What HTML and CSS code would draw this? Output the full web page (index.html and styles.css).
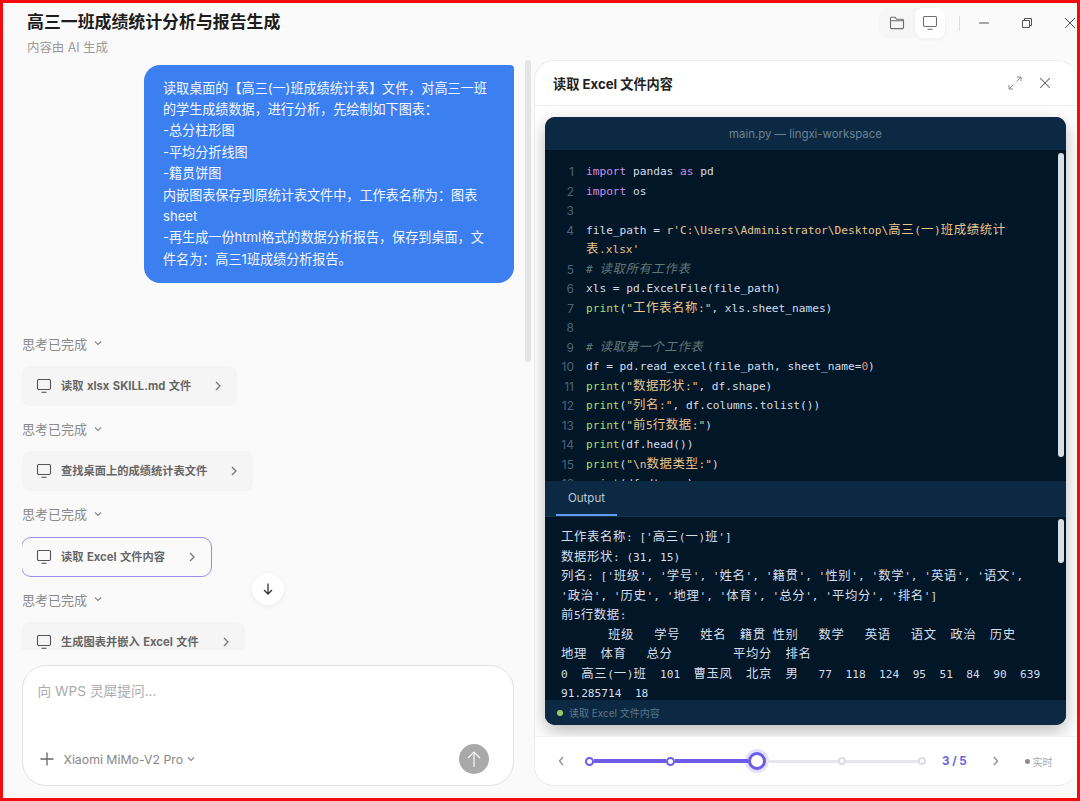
FILE: index.html
```html
<!DOCTYPE html>
<html lang="zh-CN">
<head>
    <meta charset="UTF-8">
    <meta name="viewport" content="width=device-width, initial-scale=1.0">
    <title>高三一班成绩统计分析与报告生成</title>
    <link rel="stylesheet" href="styles.css">
</head>
<body>
    <svg class="sprite" aria-hidden="true">
        <symbol id="monitor" viewBox="0 0 16 16">
            <rect x="1.5" y="1.5" width="13" height="10" rx="1.2" fill="none" stroke="currentColor" stroke-width="1.1"/>
            <path d="M5.5 14.3h5" fill="none" stroke="currentColor" stroke-width="1.1"/>
        </symbol>
        <symbol id="chev-right" viewBox="0 0 8 12">
            <path d="M2 2l4 4-4 4" fill="none" stroke="currentColor" stroke-width="1.3"/>
        </symbol>
        <symbol id="chev-down" viewBox="0 0 10 8">
            <path d="M2 2.5l3 3 3-3" fill="none" stroke="currentColor" stroke-width="1.1"/>
        </symbol>
    </svg>

    <div class="app">
        <header class="titlebar">
            <div class="title-text">
                <h1>高三一班成绩统计分析与报告生成</h1>
                <p>内容由 AI 生成</p>
            </div>
            <div class="title-actions">
                <div class="view-switch">
                    <span class="view-btn">
                        <svg width="16" height="16" viewBox="0 0 16 16"><path d="M1.5 3.2c0-.6.4-1 1-1h3.6l1.4 2h6c.6 0 1 .4 1 1v7.4c0 .6-.4 1-1 1h-11c-.6 0-1-.4-1-1zM1.5 5.8h13" fill="none" stroke="currentColor" stroke-width="1.1"/></svg>
                    </span>
                    <span class="view-btn active">
                        <svg width="16" height="16"><use href="#monitor"/></svg>
                    </span>
                </div>
                <span class="title-sep"></span>
                <svg class="win-btn" width="10" height="10" viewBox="0 0 10 10"><path d="M0 5h10" stroke="currentColor" stroke-width="1"/></svg>
                <svg class="win-btn" width="10" height="10" viewBox="0 0 10 10"><path d="M.5 2.5h7v7h-7zM2.5 2.5v-2h7v7h-2" fill="none" stroke="currentColor" stroke-width="1"/></svg>
                <svg class="win-btn" width="10" height="10" viewBox="0 0 10 10"><path d="M0 0l10 10M10 0L0 10" stroke="currentColor" stroke-width="1"/></svg>
            </div>
        </header>

        <main class="main">
            <section class="chat">
                <div class="thread">
                    <div class="bubble">读取桌面的【高三(一)班成绩统计表】文件，对高三一班的学生成绩数据，进行分析，先绘制如下图表：<br>-总分柱形图<br>-平均分折线图<br>-籍贯饼图<br>内嵌图表保存到原统计表文件中，工作表名称为：图表sheet<br>-再生成一份html格式的数据分析报告，保存到桌面，文件名为：高三1班成绩分析报告。</div>

                    <div class="steps">
                        <div class="thinking">思考已完成 <svg width="10" height="8"><use href="#chev-down"/></svg></div>
                        <div class="tool-card">
                            <svg class="tool-icon" width="16" height="16"><use href="#monitor"/></svg>
                            <span>读取 xlsx SKILL.md 文件</span>
                            <svg class="tool-chev" width="8" height="12"><use href="#chev-right"/></svg>
                        </div>
                        <div class="thinking">思考已完成 <svg width="10" height="8"><use href="#chev-down"/></svg></div>
                        <div class="tool-card">
                            <svg class="tool-icon" width="16" height="16"><use href="#monitor"/></svg>
                            <span>查找桌面上的成绩统计表文件</span>
                            <svg class="tool-chev" width="8" height="12"><use href="#chev-right"/></svg>
                        </div>
                        <div class="thinking">思考已完成 <svg width="10" height="8"><use href="#chev-down"/></svg></div>
                        <div class="tool-card selected">
                            <svg class="tool-icon" width="16" height="16"><use href="#monitor"/></svg>
                            <span>读取 Excel 文件内容</span>
                            <svg class="tool-chev" width="8" height="12"><use href="#chev-right"/></svg>
                        </div>
                        <div class="thinking">思考已完成 <svg width="10" height="8"><use href="#chev-down"/></svg></div>
                        <div class="tool-card">
                            <svg class="tool-icon" width="16" height="16"><use href="#monitor"/></svg>
                            <span>生成图表并嵌入 Excel 文件</span>
                            <svg class="tool-chev" width="8" height="12"><use href="#chev-right"/></svg>
                        </div>
                    </div>
                </div>

                <span class="chat-scroll"></span>
                <button class="to-bottom" type="button">
                    <svg width="12" height="14" viewBox="0 0 12 14"><path d="M6 1.5v10.5M2 8l4 4 4-4" fill="none" stroke="currentColor" stroke-width="1.3"/></svg>
                </button>

                <div class="composer">
                    <div class="placeholder">向 WPS 灵犀提问...</div>
                    <div class="composer-row">
                        <svg class="plus" width="14" height="14" viewBox="0 0 14 14"><path d="M7 .5v13M.5 7h13" stroke="currentColor" stroke-width="1.3"/></svg>
                        <span class="model">Xiaomi MiMo-V2 Pro</span>
                        <svg class="model-chev" width="10" height="8"><use href="#chev-down"/></svg>
                        <button class="send" type="button">
                            <svg width="14" height="18" viewBox="0 0 14 18"><path d="M7 17V2M1 8l6-6 6 6" fill="none" stroke="currentColor" stroke-width="1.1"/></svg>
                        </button>
                    </div>
                </div>
            </section>

            <aside class="panel">
                <div class="panel-head">
                    <h2>读取 Excel 文件内容</h2>
                    <svg class="head-icon expand" width="14" height="14" viewBox="0 0 14 14"><path d="M8.5 5.5L13 1M9 1h4v4M5.5 8.5L1 13M1 9v4h4" fill="none" stroke="currentColor" stroke-width="1"/></svg>
                    <svg class="head-icon" width="10" height="10" viewBox="0 0 10 10"><path d="M0 0l10 10M10 0L0 10" stroke="currentColor" stroke-width="1.1"/></svg>
                </div>

                <div class="panel-body">
                    <div class="ide">
                        <div class="ide-title">main.py — lingxi-workspace</div>

                        <div class="editor">
                            <div class="line"><span class="ln">1</span><span class="code"><span class="kw">import</span> pandas <span class="kw">as</span> pd</span></div>
                            <div class="line"><span class="ln">2</span><span class="code"><span class="kw">import</span> os</span></div>
                            <div class="line"><span class="ln">3</span><span class="code"></span></div>
                            <div class="line"><span class="ln">4</span><span class="code">file_path = <span class="str">r'C:\Users\Administrator\Desktop\<span class="cn">高三</span>(<span class="cn">一</span>)<span class="cn">班成绩统计</span></span></span></div>
                            <div class="line"><span class="ln"></span><span class="code"><span class="str"><span class="cn">表</span>.xlsx'</span></span></div>
                            <div class="line"><span class="ln">5</span><span class="code com"># <span class="cn">读取所有工作表</span></span></div>
                            <div class="line"><span class="ln">6</span><span class="code">xls = pd.ExcelFile(file_path)</span></div>
                            <div class="line"><span class="ln">7</span><span class="code"><span class="fn">print</span>(<span class="str">"<span class="cn">工作表名称</span>:"</span>, xls.sheet_names)</span></div>
                            <div class="line"><span class="ln">8</span><span class="code"></span></div>
                            <div class="line"><span class="ln">9</span><span class="code com"># <span class="cn">读取第一个工作表</span></span></div>
                            <div class="line"><span class="ln">10</span><span class="code">df = pd.read_excel(file_path, sheet_name=<span class="num">0</span>)</span></div>
                            <div class="line"><span class="ln">11</span><span class="code"><span class="fn">print</span>(<span class="str">"<span class="cn">数据形状</span>:"</span>, df.shape)</span></div>
                            <div class="line"><span class="ln">12</span><span class="code"><span class="fn">print</span>(<span class="str">"<span class="cn">列名</span>:"</span>, df.columns.tolist())</span></div>
                            <div class="line"><span class="ln">13</span><span class="code"><span class="fn">print</span>(<span class="str">"<span class="cn">前</span>5<span class="cn">行数据</span>:"</span>)</span></div>
                            <div class="line"><span class="ln">14</span><span class="code"><span class="fn">print</span>(df.head())</span></div>
                            <div class="line"><span class="ln">15</span><span class="code"><span class="fn">print</span>(<span class="str">"\n<span class="cn">数据类型</span>:"</span>)</span></div>
                            <div class="line"><span class="ln">16</span><span class="code"><span class="fn">print</span>(df.dtypes)</span></div>
                            <span class="ide-scroll editor-scroll"></span>
                        </div>

                        <div class="tabs"><span class="tab">Output</span></div>

                        <div class="output">
                            <div class="line"><span class="cn">工作表名称</span>: ['<span class="cn">高三</span>(<span class="cn">一</span>)<span class="cn">班</span>']</div>
                            <div class="line"><span class="cn">数据形状</span>: (31, 15)</div>
                            <div class="line"><span class="cn">列名</span>: ['<span class="cn">班级</span>', '<span class="cn">学号</span>', '<span class="cn">姓名</span>', '<span class="cn">籍贯</span>', '<span class="cn">性别</span>', '<span class="cn">数学</span>', '<span class="cn">英语</span>', '<span class="cn">语文</span>',</div>
                            <div class="line">'<span class="cn">政治</span>', '<span class="cn">历史</span>', '<span class="cn">地理</span>', '<span class="cn">体育</span>', '<span class="cn">总分</span>', '<span class="cn">平均分</span>', '<span class="cn">排名</span>']</div>
                            <div class="line"><span class="cn">前</span>5<span class="cn">行数据</span>:</div>
                            <div class="line">       <span class="cn">班级</span>   <span class="cn">学号</span>   <span class="cn">姓名</span>  <span class="cn">籍贯</span> <span class="cn">性别</span>   <span class="cn">数学</span>   <span class="cn">英语</span>   <span class="cn">语文</span>  <span class="cn">政治</span>  <span class="cn">历史</span></div>
                            <div class="line"><span class="cn">地理</span>  <span class="cn">体育</span>   <span class="cn">总分</span>         <span class="cn">平均分</span>  <span class="cn">排名</span></div>
                            <div class="line">0  <span class="cn">高三</span>(<span class="cn">一</span>)<span class="cn">班</span>  101  <span class="cn">曹玉凤</span>  <span class="cn">北京</span>  <span class="cn">男</span>   77  118  124  95  51  84  90  639</div>
                            <div class="line">91.285714  18</div>
                            <span class="ide-scroll output-scroll"></span>
                        </div>

                        <div class="ide-status"><span class="status-dot"></span>读取 Excel 文件内容</div>
                    </div>
                </div>

                <div class="player">
                    <svg class="step-arrow prev" width="6" height="10" viewBox="0 0 6 10"><path d="M5 1L1.5 5 5 9" fill="none" stroke="currentColor" stroke-width="1.3"/></svg>
                    <div class="slider">
                        <span class="dot done"></span>
                        <span class="seg done"></span>
                        <span class="dot done"></span>
                        <span class="seg done"></span>
                        <span class="dot current"></span>
                        <span class="seg"></span>
                        <span class="dot"></span>
                        <span class="seg"></span>
                        <span class="dot"></span>
                    </div>
                    <span class="counter">3 / 5</span>
                    <svg class="step-arrow next" width="6" height="10" viewBox="0 0 6 10"><path d="M1 1l3.5 4L1 9" fill="none" stroke="currentColor" stroke-width="1.3"/></svg>
                    <span class="live"><span class="live-dot"></span>实时</span>
                </div>
            </aside>
        </main>
    </div>
</body>
</html>
```

FILE: styles.css
```css
* {
    box-sizing: border-box;
}

body {
    margin: 0;
    font-family: Inter, "Noto Sans CJK SC", sans-serif;
    background-color: #fafafa;
}

.sprite {
    display: none;
}

.app {
    width: 1080px;
    height: 801px;
    border: 3px solid #f20d0d;
    background-color: #fafafa;
    display: flex;
    flex-direction: column;
    overflow: hidden;
}

/* Barra de titulo */
.titlebar {
    height: 57px;
    flex-shrink: 0;
    display: flex;
    justify-content: space-between;
    align-items: flex-start;
    padding: 5px 2px 0 24px;
}

.title-text h1 {
    margin: 3px 0 0;
    font-size: 16.9px;
    line-height: 22px;
    font-weight: 700;
    color: #1c1c1c;
}

.title-text p {
    margin: 6px 0 0;
    font-size: 12.4px;
    line-height: 17px;
    color: #9a9a9a;
}

.title-actions {
    display: flex;
    align-items: center;
    color: #6f6f6f;
}

.view-switch {
    display: flex;
    background-color: #f6f6f6;
    border-radius: 8px;
}

.view-btn {
    width: 36px;
    height: 30px;
    display: flex;
    align-items: center;
    justify-content: center;
}

.view-btn.active {
    width: 30px;
    background-color: #fff;
    border-radius: 8px;
    box-shadow: 0 1px 4px rgba(0, 0, 0, 0.06);
}

.title-sep {
    width: 1px;
    height: 15px;
    margin: 0 19px 0 14px;
    background-color: #dedede;
}

.win-btn {
    margin-right: 33px;
    color: #555;
}

.win-btn:last-child {
    margin-right: 0;
}

.main {
    flex: 1;
    min-height: 0;
    display: flex;
}

/* Coluna do chat */
.chat {
    width: 531px;
    flex-shrink: 0;
    position: relative;
    display: flex;
    flex-direction: column;
    padding: 0 20px 12px 19px;
}

.thread {
    height: 590px;
    flex-shrink: 0;
    overflow: hidden;
}

.bubble {
    width: 370px;
    margin: 5px 0 0 122px;
    padding: 12.5px 20px 13px 19px;
    background-color: #3b7ff1;
    color: #f4f8ff;
    border-radius: 16px 4px 16px 16px;
    font-size: 13.1px;
    line-height: 21.4px;
}

.steps {
    margin-top: 50px;
    display: flex;
    flex-direction: column;
    align-items: flex-start;
    gap: 12.7px;
}

.thinking {
    height: 20px;
    display: flex;
    align-items: center;
    gap: 6px;
    font-size: 13px;
    color: #8a8a8a;
}

.tool-card {
    height: 40px;
    flex-shrink: 0;
    display: flex;
    align-items: center;
    padding: 0 15px 0 14px;
    background-color: #f5f5f5;
    border-radius: 8px;
    font-size: 11.25px;
    line-height: 14px;
    word-spacing: 0.8px;
    font-weight: 700;
    color: #666;
}

.tool-card.selected {
    margin-left: -1px;
    padding-left: 14px;
    background-color: #fafafa;
    border: 1.6px solid #9a8cec;
    border-radius: 10px;
}

.tool-icon {
    margin-right: 9px;
    color: #555;
}

.tool-chev {
    margin-left: 23px;
    color: #777;
}

.chat-scroll {
    position: absolute;
    top: 0;
    left: 522px;
    width: 6px;
    height: 302px;
    background-color: #e4e4e4;
    border-radius: 3px;
}

.to-bottom {
    position: absolute;
    left: 249px;
    top: 513px;
    width: 32px;
    height: 32px;
    padding: 0;
    border: none;
    border-radius: 50%;
    background-color: #fff;
    color: #333;
    box-shadow: 0 1px 5px rgba(0, 0, 0, 0.08);
    display: flex;
    align-items: center;
    justify-content: center;
}

.composer {
    margin-top: 15px;
    flex: 1;
    background-color: #fff;
    border: 1px solid #e3e3e3;
    border-radius: 24px;
    padding: 15px 24px 0 14.5px;
    display: flex;
    flex-direction: column;
    justify-content: space-between;
}

.placeholder {
    font-size: 13.7px;
    line-height: 20px;
    color: #ababab;
}

.composer-row {
    display: flex;
    align-items: center;
    height: 30px;
    margin-bottom: 11px;
    color: #888;
}

.plus {
    margin-left: 2px;
    margin-right: 10px;
    color: #666;
}

.model {
    font-size: 12.3px;
}

.model-chev {
    margin-left: 3px;
}

.send {
    margin-left: auto;
    width: 30px;
    height: 30px;
    padding: 0;
    border: none;
    border-radius: 50%;
    background-color: #a9a9a9;
    color: #fff;
    display: flex;
    align-items: center;
    justify-content: center;
}

/* Painel direito */
.panel {
    flex: 1;
    min-width: 0;
    margin-bottom: 12px;
    background-color: #fff;
    border: 1px solid #ececec;
    border-right: none;
    border-radius: 20px;
    display: flex;
    flex-direction: column;
    overflow: hidden;
}

.panel-head {
    height: 45px;
    flex-shrink: 0;
    display: flex;
    align-items: center;
    padding: 0 27px 0 18px;
    border-bottom: 1px solid #eeeeee;
}

.panel-head h2 {
    margin: 0 auto 0 0;
    font-size: 13.2px;
    font-weight: 700;
    color: #222;
}

.head-icon {
    color: #777;
}

.head-icon.expand {
    margin-right: 18px;
    color: #8a8a8a;
}

.panel-body {
    flex: 1;
    min-height: 0;
    padding: 11px 11px 12px 10px;
    background-color: #fff;
}

.ide {
    height: 608px;
    display: flex;
    flex-direction: column;
    border-radius: 10px;
    overflow: hidden;
    background-color: #011627;
    box-shadow: 0 6px 18px rgba(0, 0, 0, 0.28);
    font-family: "DejaVu Sans Mono", "Noto Sans CJK SC", monospace;
    font-size: 11.16px;
    color: #d6deeb;
}

.ide-title {
    height: 33px;
    flex-shrink: 0;
    display: flex;
    align-items: center;
    justify-content: center;
    background-color: #0b2942;
    color: #6c8396;
    font-family: Inter, "Noto Sans CJK SC", sans-serif;
    font-size: 11.4px;
}

.editor {
    height: 331px;
    flex-shrink: 0;
    position: relative;
    overflow: hidden;
    padding-top: 12px;
}

.line {
    height: 19.5px;
    line-height: 19.5px;
    white-space: pre;
}

.editor .line {
    display: flex;
}

.ln {
    width: 29px;
    margin-right: 12px;
    flex-shrink: 0;
    text-align: right;
    color: #4b6479;
    font-family: Inter, sans-serif;
    font-size: 12px;
}

.cn {
    font-size: 12.4px;
    line-height: 0;
    letter-spacing: 0.6px;
}

.kw {
    color: #c792ea;
}

.fn {
    color: #addb67;
}

.str {
    color: #ecc48d;
}

.com {
    color: #637777;
    font-style: italic;
}

.num {
    color: #f78c6c;
}

.ide-scroll {
    position: absolute;
    right: 2px;
    width: 6px;
    background-color: #d8dee4;
    border-radius: 3px;
}

.editor-scroll {
    top: 3px;
    height: 304px;
}

.output-scroll {
    top: 2px;
    height: 44px;
}

.tabs {
    height: 36px;
    flex-shrink: 0;
    display: flex;
    padding-left: 11px;
    background-color: #0b2942;
    border-bottom: 1px solid #12324a;
}

.tab {
    width: 61px;
    display: flex;
    align-items: center;
    justify-content: center;
    border-bottom: 2px solid #5f9cf5;
    color: #b9c9d6;
    font-family: Inter, sans-serif;
    font-size: 11.5px;
}

.output {
    height: 183px;
    flex-shrink: 0;
    position: relative;
    overflow: hidden;
    padding: 11px 0 0 16px;
}

.ide-status {
    flex: 1;
    display: flex;
    align-items: center;
    padding-left: 12px;
    background-color: #0b2942;
    color: #5f7789;
    font-family: Inter, "Noto Sans CJK SC", sans-serif;
    font-size: 10px;
}

.status-dot {
    width: 6px;
    height: 6px;
    margin-right: 6px;
    border-radius: 50%;
    background-color: #9ccc65;
}

/* Rodape com o progresso */
.player {
    height: 49px;
    flex-shrink: 0;
    position: relative;
    display: flex;
    align-items: center;
    padding-left: 23px;
    background-color: #fff;
    border-top: 1px solid #efefef;
}

.step-arrow {
    flex-shrink: 0;
    color: #8a8a8a;
}

.slider {
    width: 341px;
    margin-left: 21px;
    display: flex;
    align-items: center;
}

.seg {
    flex: 1;
    height: 3px;
    background-color: #e6e6ee;
}

.seg.done {
    height: 4px;
    background-color: #6c5ce7;
}

.dot {
    width: 8px;
    height: 8px;
    flex-shrink: 0;
    border-radius: 50%;
    background-color: #fff;
    border: 2px solid #dcdce6;
}

.dot.done {
    width: 9px;
    height: 9px;
    border: 2px solid #6c5ce7;
}

.dot.current {
    width: 18px;
    height: 18px;
    border: 3px solid #6c5ce7;
    box-shadow: 0 0 0 3px rgba(108, 92, 231, 0.18);
}

.counter {
    margin-left: 16px;
    width: 28px;
    flex-shrink: 0;
    font-size: 11.5px;
    font-weight: 700;
    color: #6c63e0;
    white-space: nowrap;
}

.step-arrow.next {
    margin-left: 22.5px;
}

.live {
    margin-left: 26px;
    display: flex;
    align-items: center;
    gap: 3px;
    font-size: 10px;
    color: #a9a9a9;
}

.live-dot {
    width: 5px;
    height: 5px;
    border-radius: 50%;
    background-color: #8c8c8c;
}
```
